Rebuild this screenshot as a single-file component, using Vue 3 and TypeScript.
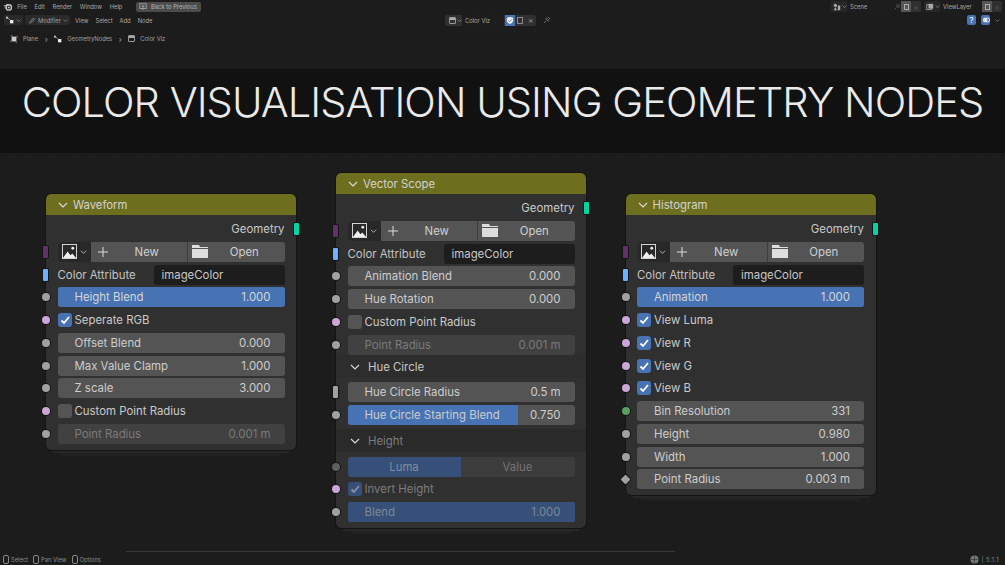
<template>
  <div class="app">
    <div class="topbar">
      <div class="menu">
        <svg class="logo" viewBox="0 0 12 12"><circle cx="7" cy="6.500" r="3.200" fill="none" stroke="#c4c4c4" stroke-width="1.600"/><circle cx="7" cy="6.500" r="1.200" fill="#c4c4c4"/><path d="M1 4.500h4M2 7h2.500M4 2.500l3 1" stroke="#c4c4c4" stroke-width="1.200"/></svg>
        <span v-for="m in menus" :key="m">{{ m }}</span>
        <span class="back">
          <svg viewBox="0 0 10 10" class="ic"><rect x="1" y="1" width="8" height="6" fill="none" stroke="#aaa"/><path d="M5 3v6M3 5l2-2 2 2" stroke="#aaa" fill="none"/></svg>
          Back to Previous
        </span>
      </div>
      <div class="scene">
        <div class="field f-scene">
          <span class="f-icon"><svg viewBox="0 0 10 10" class="ic"><circle cx="3" cy="3" r="2" fill="#aaa"/><path d="M1 9l2-4 2 4zM6 3h3v6H6z" fill="#aaa"/></svg><svg viewBox="0 0 10 6" class="chev tiny"><path d="M1 1l4 4 4-4"/></svg></span>
          <span class="name">Scene</span>
          <svg class="pin-s" viewBox="0 0 10 10"><path d="M1 9l3-3M3 3l4 4M4 2l4 4M6 1l3 3" stroke="#666" fill="none"/></svg>
          <span class="copy on"><i></i></span><span class="copy x-s">×</span>
        </div>
        <div class="field f-layer">
          <span class="f-icon"><svg viewBox="0 0 10 10" class="ic"><rect x="1" y="2" width="6" height="6" fill="none" stroke="#aaa"/><rect x="3" y="1" width="6" height="6" fill="#aaa"/></svg><svg viewBox="0 0 10 6" class="chev tiny"><path d="M1 1l4 4 4-4"/></svg></span>
          <span class="name">ViewLayer</span>
          <span class="copy on"><i></i></span><span class="copy x-s">×</span>
        </div>
      </div>
    </div>

    <div class="toolbar">
      <div class="menu tools">
        <span class="drop"><svg viewBox="0 0 12 12" class="ic"><rect x="0" y="1" width="3" height="3" fill="#bbb"/><rect x="6" y="6" width="5" height="5" fill="#eee"/><path d="M3 3l4 4" stroke="#bbb"/></svg><svg viewBox="0 0 10 6" class="chev tiny"><path d="M1 1l4 4 4-4"/></svg></span>
        <span class="drop mod"><svg viewBox="0 0 12 12" class="ic"><path d="M2 10l6-7 2 2-7 6z" fill="none" stroke="#aaa"/></svg>Modifier<svg viewBox="0 0 10 6" class="chev tiny"><path d="M1 1l4 4 4-4"/></svg></span>
        <span v-for="m in editorMenus" :key="m">{{ m }}</span>
      </div>
      <div class="tree">
        <span class="tree-icon"><i class="ic-box"></i><svg viewBox="0 0 10 6" class="chev tiny"><path d="M1 1l4 4 4-4"/></svg></span>
        <span class="tree-name">Color Viz</span>
        <svg viewBox="0 0 10 10" class="shield"><path d="M1.500 2l3.500-1 3.500 1v3c0 2-2 3.500-3.500 4-1.500-.5-3.500-2-3.500-4z" fill="#eee"/><path d="M3.200 5l1.300 1.300L7 3.800" stroke="#4772b3" fill="none"/></svg>
        <i class="copy2"></i>
        <span class="x">×</span>
      </div>
      <svg class="pin2" viewBox="0 0 10 10"><path d="M1 9l3-3M3 3l4 4M4 2l4 4M6 1l3 3" stroke="#777" fill="none"/></svg>
      <div class="gizmos">
        <span class="blue">?</span><span class="blue"><svg viewBox="0 0 10 10"><circle cx="4" cy="5" r="3" fill="#ddd"/><circle cx="7" cy="5" r="2.500" fill="none" stroke="#fff"/></svg></span>
        <svg viewBox="0 0 10 6" class="chev tiny caret"><path d="M1 1l4 4 4-4"/></svg>
      </div>
    </div>

    <div class="crumbs">
      <svg viewBox="0 0 10 10" class="ic c1"><rect x="2" y="2" width="6" height="6" fill="#ccc"/><path d="M1 1h8v8H1z" fill="none" stroke="#999" stroke-dasharray="2 6"/></svg>
      <span>Plane</span><b>›</b>
      <svg viewBox="0 0 12 12" class="ic"><rect x="0" y="1" width="3" height="3" fill="#bbb"/><rect x="6" y="6" width="5" height="5" fill="#eee"/><path d="M3 3l4 4" stroke="#bbb"/></svg>
      <span>GeometryNodes</span><b>›</b>
      <i class="ic-box"></i>
      <span>Color Viz</span>
    </div>

    <div class="title-band">COLOR VISUALISATION USING GEOMETRY NODES</div>

    <div class="canvas">
      <section v-for="n in nodes" :key="n.title" class="node" :class="n.cls">
        <header class="node-head"><svg viewBox="0 0 10 6" class="chev"><path d="M1 1l4 4 4-4" /></svg>{{ n.title }}</header>
        <div class="body">
          <template v-for="(r, i) in n.rows" :key="i">
            <div v-if="r.t === 'out'" class="row out">Geometry<i class="sock-out"></i></div>
            <div v-else-if="r.t === 'image'" class="row">
              <i class="sock rect-purple"></i>
              <div class="img-picker">
                <span class="img-drop"><svg viewBox="0 0 16 16" class="pic"><rect x=".5" y=".5" width="15" height="15" fill="none" stroke="#ddd"/><path d="M1 15l5-7 3 4 2-2 4 5z" fill="#eee"/><circle cx="11.500" cy="4.500" r="1.500" fill="#eee"/></svg><svg viewBox="0 0 10 6" class="chev small"><path d="M1 1l4 4 4-4" /></svg></span>
                <span class="img-new"><svg viewBox="0 0 10 10" class="plus"><path d="M5 0v10M0 5h10"/></svg><span>New</span></span>
                <span class="img-open"><svg viewBox="0 0 16 13" class="folder"><path d="M0 0h7l1 2h8v1H0zM0 4h16v9H0z" fill="#ddd"/></svg><span>Open</span></span>
              </div>
            </div>
            <div v-else-if="r.t === 'attr'" class="row">
              <i class="sock rect-blue"></i>
              <span class="attr-label">Color Attribute</span>
              <span class="attr-input">imageColor</span>
            </div>
            <div v-else-if="r.t === 'num'" class="row">
              <i class="sock" :class="r.sock || 'grey'"></i>
              <div class="num" :class="{ dim: r.dim, full: r.fill === 100, 'blue-dim': r.blueDim }">
                <span v-if="r.fill" class="bar" :style="{ width: r.fill + '%' }"></span>
                <span class="lab">{{ r.label }}</span><span class="val">{{ r.value }}</span>
              </div>
            </div>
            <div v-else-if="r.t === 'check'" class="row">
              <i class="sock pink"></i>
              <span class="check" :class="{ on: r.on, dimc: r.dim }"><svg v-if="r.on" viewBox="0 0 10 10"><path d="M1.500 5.500l2.500 2.500 5-6"/></svg></span>
              <span class="check-label" :class="{ dimt: r.dim }">{{ r.label }}</span>
            </div>
            <div v-else-if="r.t === 'panel'" class="panel" :class="{ dimt: r.dim, shade: r.shade }"><svg viewBox="0 0 10 6" class="chev"><path d="M1 1l4 4 4-4" /></svg><span>{{ r.label }}</span></div>
            <div v-else-if="r.t === 'toggle'" class="row">
              <i class="sock grey darker"></i>
              <div class="toggle"><span class="t-on">Luma</span><span class="t-off">Value</span></div>
            </div>
          </template>
        </div>
      </section>
    </div>

    <div class="scroll"></div>
    <div class="status">
      <div class="hints">
        <span v-for="h in hints" :key="h"><i class="mouse"></i>{{ h }}</span>
      </div>
      <div class="ver"><svg viewBox="0 0 10 10" class="globe"><circle cx="5" cy="5" r="4.500" fill="#777"/><path d="M1 5h8M5 1v8" stroke="#222" stroke-width=".6"/></svg><span>| 5.1.1</span></div>
    </div>
  </div>
</template>

<script setup lang="ts">
interface Row {
  t: string
  label?: string
  value?: string
  sock?: string
  dim?: boolean
  blueDim?: boolean
  on?: boolean
  fill?: number
  shade?: boolean
}

const menus = ['File', 'Edit', 'Render', 'Window', 'Help']
const editorMenus = ['View', 'Select', 'Add', 'Node']
const hints = ['Select', 'Pan View', 'Options']

const head: Row[] = [{ t: 'out' }, { t: 'image' }, { t: 'attr' }]

const nodes: { title: string; cls: string; rows: Row[] }[] = [
  {
    title: 'Waveform',
    cls: 'n1',
    rows: [
      ...head,
      { t: 'num', label: 'Height Blend', value: '1.000', fill: 100 },
      { t: 'check', label: 'Seperate RGB', on: true },
      { t: 'num', label: 'Offset Blend', value: '0.000' },
      { t: 'num', label: 'Max Value Clamp', value: '1.000' },
      { t: 'num', label: 'Z scale', value: '3.000' },
      { t: 'check', label: 'Custom Point Radius' },
      { t: 'num', label: 'Point Radius', value: '0.001 m', dim: true },
    ],
  },
  {
    title: 'Vector Scope',
    cls: 'n2',
    rows: [
      ...head,
      { t: 'num', label: 'Animation Blend', value: '0.000' },
      { t: 'num', label: 'Hue Rotation', value: '0.000' },
      { t: 'check', label: 'Custom Point Radius' },
      { t: 'num', label: 'Point Radius', value: '0.001 m', dim: true },
      { t: 'panel', label: 'Hue Circle' },
      { t: 'num', label: 'Hue Circle Radius', value: '0.5 m', sock: 'rect-grey' },
      { t: 'num', label: 'Hue Circle Starting Blend', value: '0.750', fill: 75 },
      { t: 'panel', label: 'Height', dim: true, shade: true },
      { t: 'toggle' },
      { t: 'check', label: 'Invert Height', on: true, dim: true },
      { t: 'num', label: 'Blend', value: '1.000', fill: 100, blueDim: true },
    ],
  },
  {
    title: 'Histogram',
    cls: 'n3',
    rows: [
      ...head,
      { t: 'num', label: 'Animation', value: '1.000', fill: 100 },
      { t: 'check', label: 'View Luma', on: true },
      { t: 'check', label: 'View R', on: true },
      { t: 'check', label: 'View G', on: true },
      { t: 'check', label: 'View B', on: true },
      { t: 'num', label: 'Bin Resolution', value: '331', sock: 'green' },
      { t: 'num', label: 'Height', value: '0.980' },
      { t: 'num', label: 'Width', value: '1.000' },
      { t: 'num', label: 'Point Radius', value: '0.003 m', sock: 'diamond' },
    ],
  },
]
</script>

<style>
html, body { margin: 0; background: #1c1c1c; overflow: hidden; }
</style>

<style scoped>
.app {
  position: relative;
  width: 1005px;
  height: 565px;
  overflow: hidden;
  background-color: #1c1c1c;
  background-image: radial-gradient(#252525 0.7px, transparent 0.8px);
  background-size: 21px 21px;
  font-family: Inter, "Liberation Sans", sans-serif;
  color: #c8c8c8;
}
.topbar, .toolbar {
  display: flex;
  align-items: center;
  height: 13px;
  padding: 0 3px;
  font-size: 5.800px;
  color: #a8a8a8;
}
.topbar { justify-content: space-between; height: 13.500px; }
.toolbar {
  display: grid;
  grid-template-columns: 442px 91px auto 1fr;
  align-items: center;
}
.menu { display: flex; align-items: center; gap: 7.700px; }
.logo { width: 10px; height: 10px; margin-right: -3.500px; }
.tools { gap: 7px; }
.back {
  display: flex;
  align-items: center;
  gap: 4px;
  background: #4b4b4b;
  border-radius: 2px;
  padding: 0 4px 0 3px;
  height: 10px;
  margin-left: 6px;
  color: #b4b4b4;
}
.ic { width: 8px; height: 8px; flex: none; }
.scene { display: flex; gap: 3px; margin-right: 0; }
.field {
  display: flex;
  align-items: center;
  height: 11px;
  background: #272727;
  border-radius: 2px;
  overflow: hidden;
}
.f-scene { width: 90px; }
.f-layer { width: 78px; }
.f-icon { display: flex; align-items: center; gap: 1px; width: 16px; padding-left: 2px; box-sizing: border-box; flex: none; }
.field .name { background: #1d1d1d; padding-left: 3px; height: 11px; line-height: 11px; flex: 1; }
.pin-s { width: 7px; height: 7px; position: relative; margin-left: -9px; flex: none; }
.copy {
  width: 10px;
  height: 11px;
  flex: none;
  background: #303030;
  display: flex;
  align-items: center;
  justify-content: center;
  color: #555;
  font-size: 8px;
}
.copy.on { background: #565656; }
.copy i { width: 5px; height: 6px; border: 1px solid #aaa; box-sizing: border-box; }
.ic-box {
  display: inline-block;
  width: 7px;
  height: 7px;
  border: 1px solid #999;
  border-radius: 1px;
  box-sizing: border-box;
  background: linear-gradient(#aaa 40%, transparent 40%);
}
.drop {
  display: flex;
  align-items: center;
  gap: 2px;
  background: #2a2a2a;
  border-radius: 2px;
  height: 10px;
  padding: 0 2px;
  margin-left: 1px;
}
.mod {
  width: 45px;
  box-sizing: border-box;
  justify-content: space-between;
  gap: 1px;
  margin-left: -5px;
  padding: 0 2px 0 3px;
  margin-right: -2px;
  color: #a0a0a0;
}
.tree {
  display: flex;
  align-items: center;
  height: 11px;
  background: #303030;
  border-radius: 2px;
  padding-left: 4px;
  box-sizing: border-box;
  overflow: hidden;
}
.tree-icon { width: 13px; display: flex; align-items: center; gap: 1px; flex: none; }
.tree-name { background: #1d1d1d; padding-left: 3px; width: 42px; box-sizing: border-box; flex: none; height: 11px; line-height: 11px; margin-right: 1px; }
.shield { width: 10px; height: 11px; background: #4772b3; padding: 1px 0; box-sizing: border-box; flex: none; }
.copy2 { width: 6px; height: 7px; border: 1px solid #888; margin-left: 2px; box-sizing: border-box; flex: none; }
.x { margin-left: 5px; color: #999; font-size: 8px; line-height: 8px; }
.pin2 { width: 8px; height: 8px; margin-left: 7px; }
.gizmos { display: flex; align-items: center; justify-content: flex-end; gap: 5px; margin-right: 2px; }
.blue {
  width: 9px;
  height: 10px;
  background: #4772b3;
  border-radius: 2px;
  color: #fff;
  font-size: 8px;
  line-height: 10px;
  text-align: center;
  display: flex;
  align-items: center;
  justify-content: center;
}
.blue svg { width: 8px; height: 8px; }
.caret { margin-left: 0; }
.crumbs {
  display: flex;
  align-items: center;
  height: 13px;
  padding: 5.500px 0 0 10px;
  font-size: 5.800px;
  color: #a0a0a0;
  gap: 5px;
}
.crumbs b { font-weight: 400; margin: 0 1.500px; font-size: 8px; }
.title-band {
  margin-top: 24px;
  height: 84px;
  box-sizing: border-box;
  background: #111;
  color: #eaeaea;
  font-size: 41.500px;
  line-height: 67px;
  text-align: center;
  white-space: nowrap;
  letter-spacing: -0.930px;
  font-weight: 350;
}
.canvas { position: absolute; inset: 0; }
.node {
  position: absolute;
  width: 250px;
  background: #303030;
  border-radius: 5px;
  outline: 1px solid #141414;
  box-shadow: 0 10px 0 -7px #272727, 0 21px 0 -15px #212121;
  padding-bottom: 3px;
}
.n1 { left: 46px; top: 194px; }
.n2 { left: 336px; top: 173px; }
.n3 { left: 625.500px; top: 194px; }
.node-head {
  height: 21px;
  background: #6e6e1f;
  border-radius: 5px 5px 0 0;
  display: flex;
  align-items: center;
  gap: 5px;
  padding-left: 12px;
  font-size: 11.300px;
  color: #d2d2d2;
}
.chev { width: 10px; height: 6px; fill: none; stroke: #ddd; stroke-width: 1.100; flex: none; }
.chev.small { width: 7px; height: 4px; }
.chev.tiny { width: 5px; height: 3px; stroke: #aaa; }
.body { padding-top: 4px; }
.row {
  position: relative;
  display: flex;
  align-items: center;
  height: 20px;
  margin-bottom: 2.750px;
  padding: 0 11.500px;
  font-size: 11.400px;
}
.row.out { justify-content: flex-end; color: #cacaca; }
.sock {
  position: absolute;
  left: -4px;
  top: 6px;
  width: 8px;
  height: 8px;
  border-radius: 50%;
  box-shadow: 0 0 0 1px #151515;
}
.grey { background: #a1a1a1; }
.grey.darker { background: #5f5f5f; }
.pink { background: #cca6d6; }
.green { background: #5a9e60; }
.diamond { background: #a1a1a1; border-radius: 1px; transform: rotate(45deg); left: -3.500px; top: 6.500px; width: 7px; height: 7px; }
.rect-purple { background: #63306b; border-radius: 1px; left: -3px; top: 4px; width: 5px; height: 12px; }
.rect-blue { background: #6cb0ff; border-radius: 1px; left: -3px; top: 4px; width: 5px; height: 12px; }
.rect-grey { background: #a1a1a1; border-radius: 1px; left: -3px; top: 4px; width: 5px; height: 12px; }
.sock-out {
  position: absolute;
  right: -2.500px;
  top: 4px;
  width: 5px;
  height: 12px;
  background: #00d6a3;
  border-radius: 1px;
  box-shadow: 0 0 0 1px #151515;
}
.img-picker {
  display: flex;
  flex: 1;
  height: 20px;
  background: #545454;
  border-radius: 3px;
  overflow: hidden;
}
.img-drop {
  width: 33px;
  box-sizing: border-box;
  padding-left: 4px;
  background: #282828;
  display: flex;
  align-items: center;
  gap: 3px;
  flex: none;
}
.pic { width: 15px; height: 15px; flex: none; }
.img-new, .img-open {
  position: relative;
  flex: 1;
  display: flex;
  align-items: center;
  justify-content: center;
  color: #cfcfcf;
  padding-left: 16px;
}
.img-open { border-left: 1px solid #3c3c3c; }
.plus { position: absolute; left: 7px; top: 5px; width: 10px; height: 10px; stroke: #ddd; fill: none; stroke-width: 1; }
.folder { position: absolute; left: 4px; top: 3.500px; width: 16px; height: 13px; }
.attr-label { width: 96px; flex: none; color: #c4c4c4; }
.attr-input {
  flex: 1;
  background: #1d1d1d;
  border-radius: 3px;
  height: 20px;
  line-height: 20px;
  padding-left: 8px;
  color: #c8c8c8;
}
.num {
  position: relative;
  flex: 1;
  height: 20px;
  background: #545454;
  border-radius: 3px;
  display: flex;
  justify-content: space-between;
  align-items: center;
  padding: 0 14px 0 17px;
  overflow: hidden;
  color: #cdcdcd;
}
.bar { position: absolute; left: 0; top: 0; bottom: 0; background: #4772b3; }
.lab, .val { position: relative; }
.full { color: #d6d6d6; }
.num.dim { background: #414141; color: #7a7a7a; }
.num.blue-dim { color: #7d8794; }
.num.blue-dim .bar { background: #37507a; }
.check {
  width: 14px;
  height: 14px;
  background: #545454;
  border-radius: 3px;
  flex: none;
  margin-right: 3px;
}
.check.on { background: #4772b3; }
.check svg { display: block; width: 14px; height: 14px; padding: 2px; box-sizing: border-box; fill: none; stroke: #fff; stroke-width: 1.800; }
.check.dimc.on { background: #37507a; }
.check.dimc svg { stroke: #8893a3; }
.check-label { color: #cacaca; }
.dimt { color: #7c7c7c; }
.panel {
  display: flex;
  align-items: center;
  height: 23px;
  margin: -2.250px 0 4px;
  padding-left: 14px;
  gap: 8px;
  font-size: 11.400px;
  color: #c8c8c8;
  background: #2d2d2d;
}
.panel.dimt { color: #7c7c7c; }
.panel.shade { margin: 4.250px 0 4.500px; background: #2a2a2a; }
.toggle {
  flex: 1;
  display: flex;
  height: 20px;
  border-radius: 3px;
  overflow: hidden;
  text-align: center;
  line-height: 20px;
}
.t-on { width: 113px; background: #37507a; color: #828c9b; }
.t-off { flex: 1; background: #3c3c3c; color: #747474; }
.scroll {
  position: absolute;
  left: 126px;
  top: 551px;
  width: 549px;
  height: 1px;
  background: #383838;
}
.status {
  position: absolute;
  left: 0;
  right: 0;
  bottom: 0;
  height: 12px;
  display: flex;
  justify-content: space-between;
  align-items: center;
  padding: 0 6px 0 3px;
  font-size: 5.800px;
  color: #8a8a8a;
}
.hints { display: flex; gap: 5px; }
.hints span { display: flex; align-items: center; gap: 2px; }
.mouse { width: 6px; height: 9px; border: 1px solid #888; border-radius: 2px; box-sizing: border-box; }
.ver { display: flex; align-items: center; gap: 3px; letter-spacing: 0.500px; }
.globe { width: 9px; height: 9px; flex: none; }
</style>
